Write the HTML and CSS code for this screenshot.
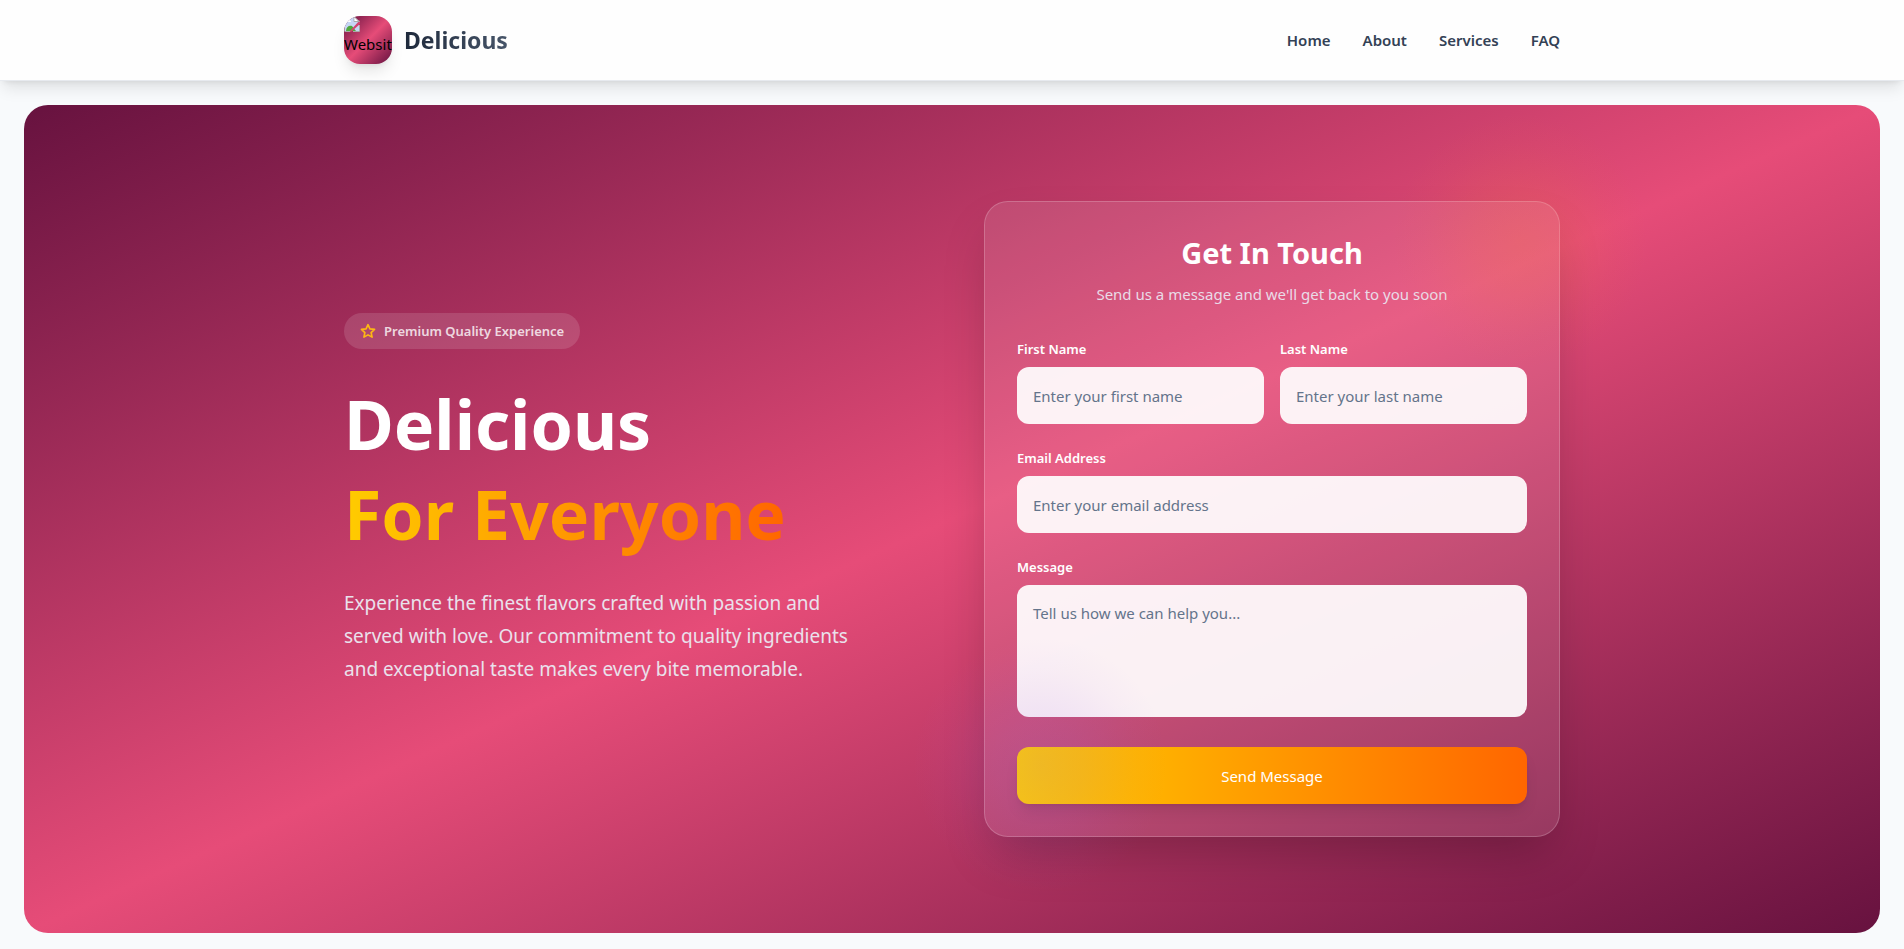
FILE: index.html
```html
<!DOCTYPE html>
<html lang="en">
<head>
<meta charset="utf-8">
<meta name="viewport" content="width=device-width, initial-scale=1">
<title>Delicious</title>
<link rel="stylesheet" href="styles.css">
</head>
<body>
<header class="site-header">
  <div class="container header-row">
    <a class="brand" href="#home">
      <span class="brand-logo">
        <svg class="brand-icon" viewBox="0 0 16 16" width="16" height="16" aria-hidden="true">
          <path d="M1 1h9l5 5v9H1z" fill="#c6d6f5"/>
          <path d="M2 15c0-4 3-6 6-5l4 5z" fill="#4fa83d"/>
          <path d="M3 6a2 2 0 0 1 4 0z" fill="#fff"/>
          <path d="M16 4v4L7 16H5z" fill="#d4436f"/>
          <path d="M.5 15.500V.5H10M10 .5v5h5.500L10 .5M1 15.500h5M9 15.500h6.500V9" fill="none" stroke="#a9a9a9"/>
          <path d="M10.500 1.500v3.500h3.500z" fill="#fff"/>
        </svg>
        <span class="brand-alt">Website</span>
      </span>
      <span class="brand-name">Delicious</span>
    </a>
    <nav class="nav">
      <a href="#home">Home</a>
      <a href="#about">About</a>
      <a href="#services">Services</a>
      <a href="#faq">FAQ</a>
    </nav>
  </div>
</header>
<main class="hero" id="home">
  <div class="container hero-grid">
    <section class="intro">
      <div class="badge">
        <svg viewBox="0 0 24 24" width="16" height="16" fill="none" stroke="#fdb913" stroke-width="2.500" stroke-linejoin="round" aria-hidden="true">
          <path d="M12 2.500l2.900 6.300 6.900.8-5.100 4.700 1.400 6.900L12 17.800l-6.100 3.400 1.400-6.900-5.100-4.700 6.900-.8z"/>
        </svg>
        <span>Premium Quality Experience</span>
      </div>
      <h1 class="headline">Delicious<br><span class="headline-accent">For Everyone</span></h1>
      <p class="lead">Experience the finest flavors crafted with passion and served with love. Our commitment to quality ingredients and exceptional taste makes every bite memorable.</p>
    </section>
    <section class="card-wrap">
      <form class="card">
        <h2 class="card-title">Get In Touch</h2>
        <p class="card-subtitle">Send us a message and we'll get back to you soon</p>
        <div class="fields">
          <div class="field-row">
            <div class="field">
              <label for="first">First Name</label>
              <input id="first" type="text" placeholder="Enter your first name">
            </div>
            <div class="field">
              <label for="last">Last Name</label>
              <input id="last" type="text" placeholder="Enter your last name">
            </div>
          </div>
          <div class="field">
            <label for="email">Email Address</label>
            <input id="email" type="email" placeholder="Enter your email address">
          </div>
          <div class="field">
            <label for="message">Message</label>
            <textarea id="message" rows="4" placeholder="Tell us how we can help you..."></textarea>
          </div>
        </div>
        <button class="submit" type="submit">Send Message</button>
      </form>
      <div class="glow glow-warm"></div>
      <div class="glow glow-violet"></div>
    </section>
  </div>
</main>
</body>
</html>
```

FILE: styles.css
```css
*, *::before, *::after { box-sizing: border-box; }

body {
  margin: 0;
  background: #f8fafc;
  font-family: "Segoe UI", "Noto Sans", "Open Sans", sans-serif;
  font-size: 15px;
  line-height: 24px;
  color: #334155;
}

h1, h2, p { margin: 0; }
a { color: inherit; text-decoration: none; }

.container {
  max-width: 1280px;
  margin: 0 auto;
  padding: 0 32px;
}

.site-header {
  background: #fefefe;
  border-bottom: 1px solid #e7eaef;
  box-shadow: 0 10px 15px -3px rgba(0, 0, 0, .1), 0 4px 6px -4px rgba(0, 0, 0, .1);
}

.header-row {
  display: flex;
  align-items: center;
  justify-content: space-between;
  padding-top: 16px;
  padding-bottom: 16px;
}

.brand { display: flex; align-items: center; gap: 12px; }

.brand-logo {
  display: block;
  width: 48px;
  height: 48px;
  overflow: hidden;
  border-radius: 16px;
  background: linear-gradient(135deg, #64113f, #e64c78 50%, #64113f);
  box-shadow: 0 10px 15px -3px rgba(0, 0, 0, .1), 0 4px 6px -4px rgba(0, 0, 0, .1);
}

.brand-icon { display: block; }
.brand-alt { display: block; color: #000; white-space: nowrap; }

.brand-name {
  font-size: 23px;
  line-height: 32px;
  font-weight: 700;
  background: linear-gradient(90deg, #1e293b, #475569);
  -webkit-background-clip: text;
  background-clip: text;
  color: transparent;
}

.nav { display: flex; gap: 32px; font-weight: 600; }

.hero {
  margin: 24px 24px 16px;
  padding: 96px 0;
  border-radius: 24px;
  background: linear-gradient(to bottom right, #67123f, #e64c78 50%, #67123f);
}

.hero-grid {
  display: grid;
  grid-template-columns: 1fr 1fr;
  gap: 64px;
  align-items: center;
}

.intro { padding-bottom: 40px; }

.badge {
  display: inline-flex;
  align-items: center;
  gap: 8px;
  padding: 8px 16px;
  margin-bottom: 30px;
  border-radius: 18px;
  background: rgba(255, 255, 255, .13);
  color: rgba(255, 255, 255, .8);
  font-size: 13px;
  line-height: 20px;
  font-weight: 600;
}

.headline {
  color: #fff;
  font-size: 68px;
  line-height: 90px;
  font-weight: 700;
}

.headline-accent {
  display: inline-block;
  background: linear-gradient(90deg, #ffcc00, #ff6600);
  -webkit-background-clip: text;
  background-clip: text;
  color: transparent;
}

.lead {
  max-width: 512px;
  margin-top: 28px;
  color: #eae1ec;
  font-size: 19px;
  line-height: 33px;
}

.card-wrap { position: relative; }

.card {
  padding: 32px;
  border: 1px solid rgba(255, 255, 255, .2);
  border-radius: 24px;
  background: rgba(255, 255, 255, .1);
  box-shadow: 0 25px 50px -12px rgba(0, 0, 0, .25);
}

.card-title {
  margin-bottom: 10px;
  color: #fff;
  font-size: 29px;
  line-height: 38px;
  font-weight: 700;
  text-align: center;
}

.card-subtitle {
  margin-bottom: 33px;
  color: #eadbe7;
  text-align: center;
}

.fields { display: grid; gap: 24px; }
.field-row { display: grid; grid-template-columns: 1fr 1fr; gap: 16px; }
.field { display: flex; flex-direction: column; gap: 8px; }

.field label {
  color: #fff;
  font-size: 13px;
  line-height: 20px;
  font-weight: 600;
}

.field input,
.field textarea {
  display: block;
  width: 100%;
  height: 57px;
  padding: 16px;
  border: 0;
  border-radius: 12px;
  background: rgba(255, 255, 255, .92);
  color: #1e293b;
  font: inherit;
}

.field textarea { height: 132px; resize: none; }

.field input::placeholder,
.field textarea::placeholder { color: #64748b; opacity: 1; }

.submit {
  display: block;
  width: 100%;
  height: 57px;
  margin-top: 30px;
  border: 0;
  border-radius: 12px;
  background: linear-gradient(90deg, #ffcc00, #ff6600);
  box-shadow: 0 10px 15px -3px rgba(0, 0, 0, .1), 0 4px 6px -4px rgba(0, 0, 0, .1);
  color: #fff;
  font: inherit;
}

/* Soft coloured light over the card corners */
.glow {
  position: absolute;
  width: 256px;
  height: 256px;
  border-radius: 50%;
  pointer-events: none;
}

.glow-warm {
  top: -88px;
  right: -88px;
  background: radial-gradient(closest-side, rgba(240, 125, 50, .2), rgba(240, 125, 50, .14) 35%, rgba(240, 125, 50, .04) 75%, rgba(240, 125, 50, 0));
}

.glow-violet {
  bottom: -56px;
  left: -72px;
  background: radial-gradient(closest-side, rgba(150, 100, 240, .15), rgba(150, 100, 240, .11) 35%, rgba(150, 100, 240, .03) 75%, rgba(150, 100, 240, 0));
}

@media (max-width: 900px) {
  .hero-grid { grid-template-columns: 1fr; }
  .headline { font-size: 48px; line-height: 60px; }
}
```
